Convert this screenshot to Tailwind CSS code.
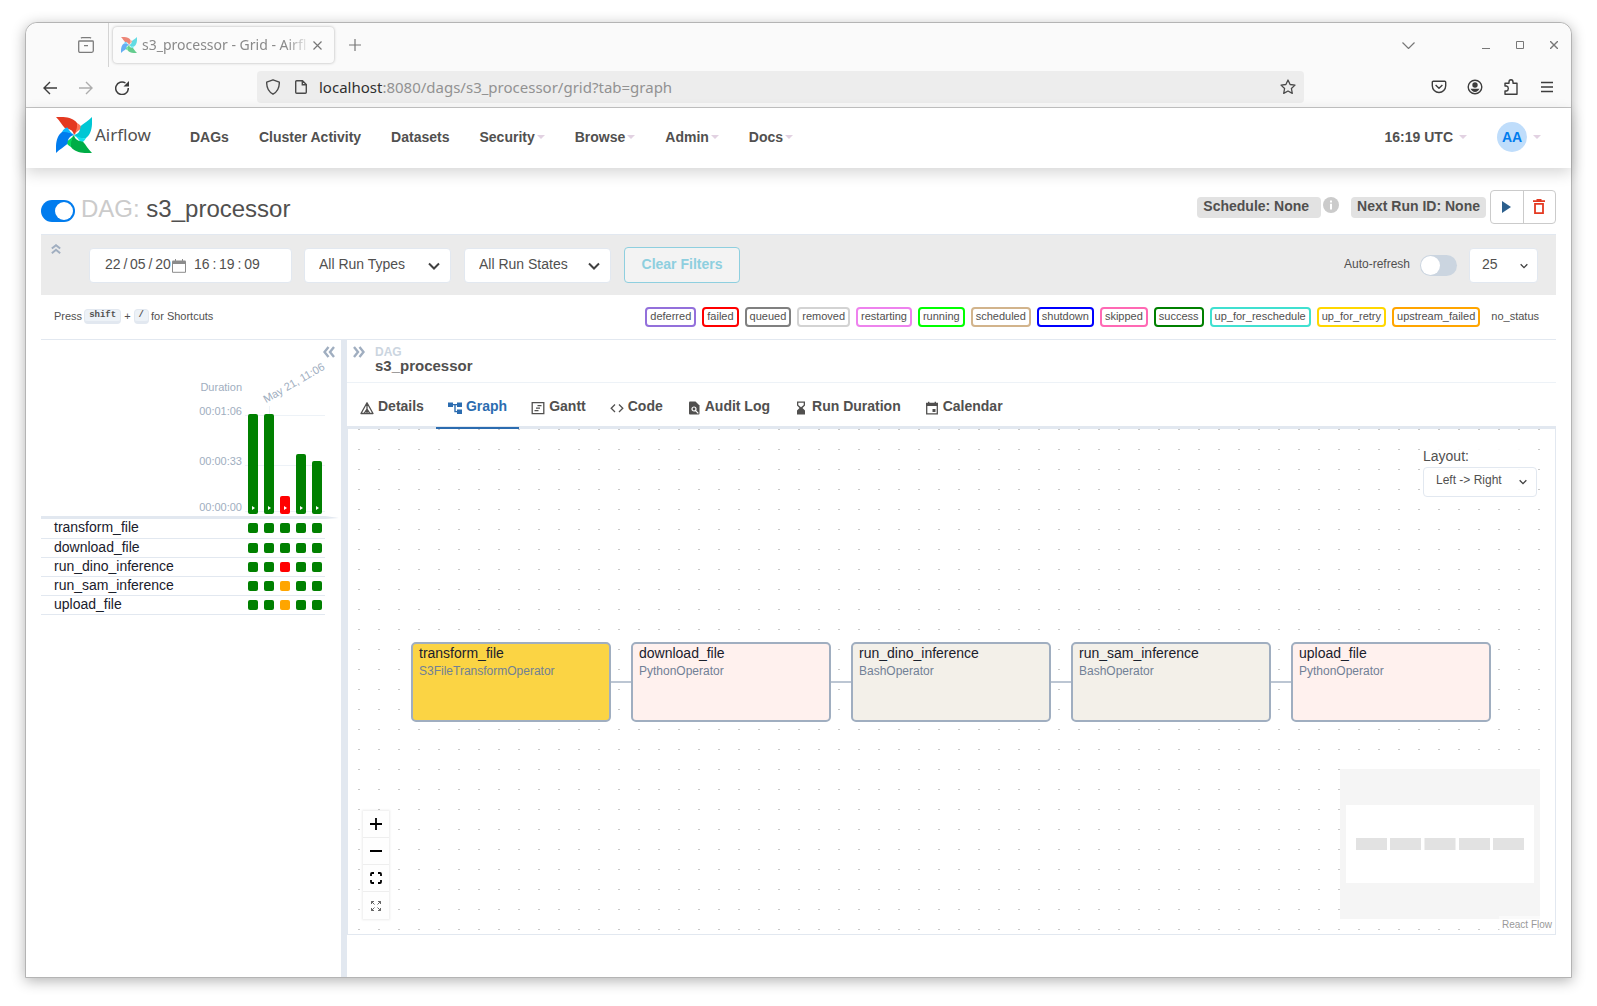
<!DOCTYPE html>
<html lang="en">
<head>
<meta charset="utf-8">
<title>s3_processor - Grid - Airflow</title>
<script src="https://cdn.jsdelivr.net/npm/@tailwindcss/browser@4"></script>
</head>
<body class="flex min-h-screen flex-col bg-white px-[25px] pt-[22px] pb-7 font-['Liberation_Sans',Arial,sans-serif] text-sm text-[#51504f]">
<svg class="hidden" aria-hidden="true">
  <symbol id="pinwheel" viewBox="0 0 36 36">
    <g><path fill="#e43921" d="M0 0C9-.5 17 .5 21 6 22 10 21 15 18 18 17 14 15 12 9 11.300 6 8 4 4 0 0Z"/><path fill="#ff7557" d="M21 6C24 7.500 25.500 9.500 25.500 11.500 23 13 20 15 18 18 20.500 14 21.500 10 21 6Z"/></g>
    <g transform="rotate(90 18 18)"><path fill="#00c7d4" d="M0 0C9-.5 17 .5 21 6 22 10 21 15 18 18 17 14 15 12 9 11.300 6 8 4 4 0 0Z"/><path fill="#11e1ee" d="M21 6C24 7.500 25.500 9.500 25.500 11.500 23 13 20 15 18 18 20.500 14 21.500 10 21 6Z"/></g>
    <g transform="rotate(180 18 18)"><path fill="#00ad46" d="M0 0C9-.5 17 .5 21 6 22 10 21 15 18 18 17 14 15 12 9 11.300 6 8 4 4 0 0Z"/><path fill="#04d659" d="M21 6C24 7.500 25.500 9.500 25.500 11.500 23 13 20 15 18 18 20.500 14 21.500 10 21 6Z"/></g>
    <g transform="rotate(270 18 18)"><path fill="#017cee" d="M0 0C9-.5 17 .5 21 6 22 10 21 15 18 18 17 14 15 12 9 11.300 6 8 4 4 0 0Z"/><path fill="#0cb6ff" d="M21 6C24 7.500 25.500 9.500 25.500 11.500 23 13 20 15 18 18 20.500 14 21.500 10 21 6Z"/></g>
  </symbol>
  <symbol id="chev" viewBox="0 0 12 12"><path d="M1 3.500 6 8.500l5-5" fill="none" stroke="currentColor" stroke-width="2"/></symbol>
  <symbol id="caret" viewBox="0 0 8 4"><path d="M0 0h8L4 4Z" fill="#e2d2e2"/></symbol>
  <symbol id="dbl" viewBox="0 0 12 12"><path d="M1 1l4 5-4 5M6.500 1l4 5-4 5" fill="none" stroke="#a0aec0" stroke-width="2.400"/></symbol>
</svg>

<div class="flex flex-1 flex-col rounded-t-xl border border-[#b4b4b4] bg-white shadow-[0_3px_14px_rgba(0,0,0,0.3)]">
  <!-- browser tabs -->
  <div class="flex h-11 items-center rounded-t-xl bg-[#fafafa] pr-[13px] font-['Noto_Sans','Open_Sans',sans-serif] text-[#8a8a8a]">
    <button aria-label="Recent browsing" class="flex h-11 w-[83px] items-center justify-end border-r border-[#d4d4d4] pr-3.5">
      <svg class="size-4" viewBox="0 0 16 16" fill="none" stroke="#7c7c7c" stroke-width="1.300"><path d="M3 1.200Q3.500.7 4 .7h8q.5 0 1 .5M1.500 4h13q.8 0 .8.800v9q0 1.500-1.500 1.500H2.200Q.7 15.300.7 13.800v-9Q.7 4 1.500 4ZM6 8.700h4"/></svg>
    </button>
    <div class="ml-1 flex h-9 w-[221px] items-center rounded bg-[#fbfbfb] pl-2 shadow-[0_0_3px_rgba(0,0,0,0.3)]">
      <svg class="size-4 shrink-0 opacity-60"><use href="#pinwheel"/></svg>
      <span class="ml-[5px] w-[169px] text-sm whitespace-nowrap mask-r-from-85%">s3_processor - Grid - Airfl</span>
      <button aria-label="Close tab" class="ml-[2px]"><svg class="size-[9px]" viewBox="0 0 9 9" stroke="#777" stroke-width="1.200"><path d="m.5.5 8 8m0-8-8 8"/></svg></button>
    </div>
    <button aria-label="New tab" class="ml-[15px]"><svg class="size-3" viewBox="0 0 12 12" stroke="#777" stroke-width="1.200"><path d="M6 0v12M0 6h12"/></svg></button>
    <div class="ml-auto flex items-center">
      <button aria-label="List tabs" class="mr-[67px]"><svg class="h-[7px] w-[13px]" viewBox="0 0 13 7" fill="none" stroke="#777" stroke-width="1.200"><path d="m.5.500 6 6 6-6"/></svg></button>
      <button aria-label="Minimise" class="mr-[26px]"><svg class="size-2" viewBox="0 0 8 8" stroke="#777"><path d="M0 7.500h8"/></svg></button>
      <button aria-label="Maximise" class="mr-[26px]"><svg class="size-2" viewBox="0 0 8 8" fill="none" stroke="#777"><path d="M.5.5h7v7h-7z"/></svg></button>
      <button aria-label="Close window"><svg class="size-2" viewBox="0 0 8 8" stroke="#777" stroke-width="1.400"><path d="m0 0 8 8m0-8-8 8"/></svg></button>
    </div>
  </div>
  <!-- browser toolbar -->
  <div class="flex h-[41px] items-center border-b border-[#c4c4c4] bg-[#fafafa] text-[#3d3d3d]">
    <div class="flex w-[231px] gap-[22px] pt-px pl-[17px]">
      <button aria-label="Back"><svg class="size-3.5" viewBox="0 0 14 14" fill="none" stroke="currentColor" stroke-width="1.400"><path d="M14 7H1m6-6L1 7l6 6"/></svg></button>
      <button aria-label="Forward"><svg class="size-3.5" viewBox="0 0 14 14" fill="none" stroke="#adadad" stroke-width="1.400"><path d="M0 7h13M7 1l6 6-6 6"/></svg></button>
      <button aria-label="Reload"><svg class="size-3.5" viewBox="0 0 14 14" fill="none" stroke="currentColor" stroke-width="1.500"><path d="M13.300 7A6.300 6.300 0 1 1 10.500 2"/><path d="M14 0v5.500H8.500Z" fill="currentColor" stroke="none"/></svg></button>
    </div>
    <div class="flex h-8 flex-1 items-center rounded bg-[#ededed] pr-2 pl-[9px]">
      <svg class="h-4 w-3.5" viewBox="0 0 14 16" fill="none" stroke="#4a4a4a" stroke-width="1.400"><path d="M7 .8 13.300 3.200C13.500 9 11 13 7 15.200 3 13 .5 9 .7 3.200Z" stroke-linejoin="round"/></svg>
      <svg class="ml-[15px] h-3.5 w-3" viewBox="0 0 12 14" fill="none" stroke="#4a4a4a" stroke-width="1.400"><path d="M7.500.7H1.700q-1 0-1 1v10.600q0 1 1 1h8.600q1 0 1-1V4.500ZM7.300.7v4h4"/></svg>
      <span class="ml-3 flex-1 pt-0.5 font-['Noto_Sans','Open_Sans',sans-serif] text-[15px] text-[#929292]"><span class="text-[#303030]">localhost</span>:8080/dags/s3_processor/grid?tab=graph</span>
      <button aria-label="Bookmark"><svg class="size-4" viewBox="0 0 16 16" fill="none" stroke="#4a4a4a" stroke-width="1.300" stroke-linejoin="round"><path d="m8 1 2.100 4.500 4.900.6-3.600 3.400.9 4.900L8 12l-4.300 2.400.9-4.900L1 6.100l4.900-.6Z"/></svg></button>
    </div>
    <div class="flex w-[267px] items-center justify-end gap-5 pr-4">
      <button aria-label="Pocket"><svg class="size-4" viewBox="0 0 16 16" fill="none" stroke="currentColor" stroke-width="1.400"><path d="M2.300 2.200h11.400q1 0 1 1v3.600a6.700 6.700 0 0 1-13.400 0V3.200q0-1 1-1ZM4.600 6 8 9.300 11.400 6" stroke-linejoin="round"/></svg></button>
      <button aria-label="Account"><svg class="size-4" viewBox="0 0 16 16"><circle cx="8" cy="8" r="6.800" fill="none" stroke="currentColor" stroke-width="1.400"/><circle cx="8" cy="6" r="2.700" fill="currentColor"/><path d="M3.500 9.800h9Q11 12.900 8 12.900T3.500 9.800Z" fill="currentColor"/></svg></button>
      <button aria-label="Extensions"><svg class="size-4" viewBox="0 0 16 16" fill="none" stroke="currentColor" stroke-width="1.400" stroke-linejoin="round"><path d="M2 7V4.200h4V3q0-2.200 2-2.200T10 3v1.200h4v11H2V12h1.500q1.800-.3 1.800-2.500T3.500 7Z"/></svg></button>
      <button aria-label="Menu"><svg class="size-4" viewBox="0 0 16 16" stroke="currentColor" stroke-width="1.300"><path d="M2 3.500h12M2 8h12M2 12.500h12"/></svg></button>
    </div>
  </div>

  <!-- Airflow navigation -->
  <nav class="flex h-[60px] items-center bg-white px-[30px] pb-0.5 font-bold shadow-[0_5px_14px_rgba(0,0,0,0.16)]">
    <a href="#" class="flex w-[134px] items-center gap-[3px] pb-1 font-['Noto_Sans',sans-serif] text-[17px] font-normal"><svg class="size-9"><use href="#pinwheel"/></svg>Airflow</a>
    <ul class="flex gap-[30px]">
      <li><a href="#">DAGs</a></li>
      <li><a href="#">Cluster Activity</a></li>
      <li><a href="#">Datasets</a></li>
      <li><a href="#" class="flex items-center gap-0.5">Security<svg class="h-1 w-2"><use href="#caret"/></svg></a></li>
      <li><a href="#" class="flex items-center gap-0.5">Browse<svg class="h-1 w-2"><use href="#caret"/></svg></a></li>
      <li><a href="#" class="flex items-center gap-0.5">Admin<svg class="h-1 w-2"><use href="#caret"/></svg></a></li>
      <li><a href="#" class="flex items-center gap-0.5">Docs<svg class="h-1 w-2"><use href="#caret"/></svg></a></li>
    </ul>
    <a href="#" class="ml-auto flex items-center gap-1.5">16:19 UTC<svg class="h-1 w-2"><use href="#caret"/></svg></a>
    <a href="#" class="ml-[30px] flex items-center gap-1.5"><span class="grid size-[30px] place-items-center rounded-full bg-[#bfddfb] text-[#017cee]">AA</span><svg class="h-1 w-2"><use href="#caret"/></svg></a>
  </nav>

  <main class="flex flex-1 flex-col px-[15px]">
    <header class="flex h-[66px] items-center pt-3">
      <input type="checkbox" role="switch" checked aria-label="Pause or unpause DAG" class="mt-2 h-[22px] w-[34px] appearance-none rounded-full bg-[#017cee] before:mt-0.5 before:ml-[14px] before:block before:size-[18px] before:rounded-full before:bg-white">
      <h1 class="mt-1 ml-1.5 text-2xl"><span class="text-[#cbcbcb]">DAG:</span> s3_processor</h1>
      <div class="ml-auto flex items-center font-bold">
        <span class="flex h-[21px] items-center rounded bg-[#e2e2e2] pr-3 pb-0.5 pl-1.5">Schedule: None</span>
        <svg class="mb-1 ml-0.5 size-4" viewBox="0 0 16 16"><circle cx="8" cy="8" r="8" fill="#cbcbcb"/><path d="M7 3.500h2v2H7zM7 6.800h2v5.700H7z" fill="#fff"/></svg>
        <span class="ml-3 flex h-[21px] items-center rounded bg-[#e2e2e2] px-1.5 pb-0.5">Next Run ID: None</span>
        <div class="ml-1 flex h-[34px] w-[66px] divide-x divide-[#cbcbcb] rounded border border-[#cbcbcb]">
          <button aria-label="Trigger DAG" class="grid flex-1 place-items-center"><svg class="h-3 w-[9px]" viewBox="0 0 9 12"><path d="M0 0l9 6-9 6Z" fill="#2c5f8d"/></svg></button>
          <button aria-label="Delete DAG" class="grid flex-1 place-items-center"><svg class="h-4 w-3" viewBox="0 0 12 16" fill="none" stroke="#e43921" stroke-width="1.800"><path d="M0 2.200h12M3.500 1h5M2 4.900h8v9.200H2Z"/></svg></button>
        </div>
      </div>
    </header>

    <form class="flex h-[61px] items-center border-t border-[#e2e8f0] bg-[#ebebeb] pr-[18px]">
      <button type="button" aria-label="Collapse filters" class="mb-8 ml-2.5"><svg class="block size-2.5 -rotate-90"><use href="#dbl"/></svg></button>
      <div class="ml-7 flex h-[35px] w-[203px] items-center rounded border border-[#e2e8f0] bg-white pb-0.5 pl-[15px]">
        <input aria-label="Base date" value="22&#8201;/&#8201;05&#8201;/&#8201;20" class="w-[67px]">
        <svg class="mt-1 h-3.5 w-3.5" viewBox="0 0 14 14" fill="none" stroke="#8c8c8c"><path d="M.5 2.500h13v10.800H.5Z"/><path d="M.5 1.500h13V5H.5ZM3 0h1v2H3zM10 0h1v2h-1z" fill="#8c8c8c" stroke="none"/></svg>
        <input aria-label="Base time" value="16&#8201;:&#8201;19&#8201;:&#8201;09" class="ml-2 w-20">
      </div>
      <div class="relative ml-3">
        <select aria-label="Run types" class="h-[35px] w-[147px] appearance-none rounded border border-[#e2e8f0] bg-white px-3.5 pb-0.5"><option>All Run Types</option></select>
        <svg class="pointer-events-none absolute top-3 right-[11px] size-3 text-[#404040]"><use href="#chev"/></svg>
      </div>
      <div class="relative ml-[13px]">
        <select aria-label="Run states" class="h-[35px] w-[147px] appearance-none rounded border border-[#e2e8f0] bg-white px-3.5 pb-0.5"><option>All Run States</option></select>
        <svg class="pointer-events-none absolute top-3 right-[11px] size-3 text-[#404040]"><use href="#chev"/></svg>
      </div>
      <button type="button" class="ml-[13px] h-9 w-[116px] rounded border border-[#8ecfdf] bg-[#f3f3f3] pb-0.5 font-bold text-[#8ecfdf]">Clear Filters</button>
      <label class="ml-auto flex items-center gap-2.5 text-xs"><span class="pb-0.5">Auto-refresh</span>
        <input type="checkbox" role="switch" class="h-[21px] w-[37px] appearance-none rounded-full bg-[#cbd5e0] before:mt-px before:ml-px before:block before:size-[19px] before:rounded-full before:bg-white">
      </label>
      <div class="relative ml-3">
        <select aria-label="Number of runs" class="h-[35px] w-[69px] appearance-none rounded border border-[#e2e8f0] bg-white px-3 pb-0.5"><option>25</option></select>
        <svg class="pointer-events-none absolute top-3.5 right-2.5 size-2 text-[#404040]"><use href="#chev"/></svg>
      </div>
    </form>

    <div class="flex h-[45px] items-center border-b border-[#e2e8f0] pr-3 pl-[13px] text-[11px]">
      <p class="flex items-center gap-0.5">Press <kbd class="rounded border border-b-[3px] border-[#e2e8f0] bg-[#edf2f7] px-1 font-['Liberation_Mono',monospace] text-[9px] leading-[11px] font-bold">shift</kbd> <span class="px-px">+</span> <kbd class="rounded border border-b-[3px] border-[#e2e8f0] bg-[#edf2f7] px-1 font-['Liberation_Mono',monospace] text-[9px] leading-[11px] font-bold">/</kbd> for Shortcuts</p>
      <ul class="ml-auto flex gap-1.5 leading-[14px] *:rounded *:border-2 *:px-[3px] *:pb-0.5 *:whitespace-nowrap">
        <li class="border-[#9370db]">deferred</li>
        <li class="border-[#ff0000]">failed</li>
        <li class="border-[#808080]">queued</li>
        <li class="border-[#d3d3d3]">removed</li>
        <li class="border-[#ee82ee]">restarting</li>
        <li class="border-[#00ff00]">running</li>
        <li class="border-[#d2b48c]">scheduled</li>
        <li class="border-[#0000ff]">shutdown</li>
        <li class="border-[#ff69b4]">skipped</li>
        <li class="border-[#008000]">success</li>
        <li class="border-[#40e0d0]">up_for_reschedule</li>
        <li class="border-[#ffd700]">up_for_retry</li>
        <li class="border-[#ffa500]">upstream_failed</li>
        <li class="border-transparent">no_status</li>
      </ul>
    </div>

    <div class="flex flex-1">
      <!-- run grid -->
      <section class="w-[300px] shrink-0">
        <div class="relative flex h-[176px] justify-end gap-[3px] pr-4">
          <button aria-label="Hide details" class="absolute top-1.5 right-1.5"><svg class="block size-3 rotate-180"><use href="#dbl"/></svg></button>
          <div class="flex flex-col pt-[39px] text-right text-[11px] leading-4 text-[#a0aec0]">
            <span>Duration</span><span class="mt-2">00:01:06</span><span class="mt-[34px]">00:00:33</span><span class="mt-[30px]">00:00:00</span>
          </div>
          <div class="relative mt-[75px] flex h-[99px] w-20 items-end gap-1.5 px-[3px]">
            <div class="absolute inset-x-0 top-0 h-[97px] border-y border-[#edf2f7]"></div>
            <div class="absolute inset-x-0 top-[50px] h-px bg-[#edf2f7]"></div>
            <div class="absolute -top-[9px] left-6 h-2 w-px bg-[#edf2f7]"></div>
            <span class="absolute -top-[22px] left-[22px] origin-bottom-left -rotate-[30deg] text-[11px] leading-3 whitespace-nowrap text-[#a0aec0]">May 21, 11:06</span>
            <button aria-label="Run 1" class="relative flex w-2.5 items-end justify-center rounded-xs bg-[#008000] pb-1" style="height:100px"><svg class="h-1 w-[3px]" viewBox="0 0 3 4"><path d="M0 0l3 2-3 2Z" fill="#fff"/></svg></button>
            <button aria-label="Run 2" class="relative flex w-2.5 items-end justify-center rounded-xs bg-[#008000] pb-1" style="height:100px"><svg class="h-1 w-[3px]" viewBox="0 0 3 4"><path d="M0 0l3 2-3 2Z" fill="#fff"/></svg></button>
            <button aria-label="Run 3" class="relative flex w-2.5 items-end justify-center rounded-xs bg-[#ff0000] pb-1" style="height:18px"><svg class="h-1 w-[3px]" viewBox="0 0 3 4"><path d="M0 0l3 2-3 2Z" fill="#fff"/></svg></button>
            <button aria-label="Run 4" class="relative flex w-2.5 items-end justify-center rounded-xs bg-[#008000] pb-1" style="height:60px"><svg class="h-1 w-[3px]" viewBox="0 0 3 4"><path d="M0 0l3 2-3 2Z" fill="#fff"/></svg></button>
            <button aria-label="Run 5" class="relative flex w-2.5 items-end justify-center rounded-xs bg-[#008000] pb-1" style="height:53px"><svg class="h-1 w-[3px]" viewBox="0 0 3 4"><path d="M0 0l3 2-3 2Z" fill="#fff"/></svg></button>
          </div>
        </div>
        <svg class="block h-[3px] w-full" viewBox="0 0 300 3" preserveAspectRatio="none"><path d="M0 0h284l14 2-14 1H0Z" fill="#e2e8f0"/></svg>
        <table class="w-[284px] table-fixed border-collapse leading-4 text-[#1a202c]">
          <colgroup><col><col class="w-4"><col class="w-4"><col class="w-4"><col class="w-4"><col class="w-[13px]"></colgroup>
          <tbody id="tasks"></tbody>
        </table>
      </section>

      <div class="w-1.5 shrink-0 bg-[#e2e8f0]"></div>

      <!-- details -->
      <section class="flex min-w-0 flex-1 flex-col pb-[42px]">
        <div class="flex h-[43px] items-start border-b border-[#edf2f7] pt-1.5 pl-1.5">
          <button aria-label="Hide grid"><svg class="block size-3"><use href="#dbl"/></svg></button>
          <div class="ml-2.5 font-bold"><p class="text-xs leading-[13px] text-[#cbd5e0]">DAG</p><p class="text-[15px] leading-[14px]">s3_processor</p></div>
        </div>
        <div role="tablist" class="flex h-[46px] border-b-[3px] border-[#e2e8f0] pl-px font-bold *:-mb-[3px] *:flex *:items-center *:gap-1 *:border-b-2 *:border-transparent *:px-3 *:pt-0.5">
          <button role="tab"><svg class="mt-1 size-3.5" viewBox="0 0 14 14" fill="none" stroke="currentColor" stroke-width="1.300"><path d="M7 1.800 13 12.500H1ZM7 1.800v10.700M7 8 4 12.500M7 8l3 4.500" stroke-linejoin="round"/></svg>Details</button>
          <button role="tab" aria-selected="true" class="text-[#2b6cb0]" style="border-color:#2b6cb0"><svg class="mt-1 size-3.5" viewBox="0 0 14 14" fill="currentColor"><path d="M0 1.500h5v4.500H0zM9 1.500h5v4.500H9zM9 8.500h5V13H9zM5 3h4v1.300H5zM6.300 3.500h1.400v7.700H6.300zM6.300 10h3v1.300h-3z"/></svg>Graph</button>
          <button role="tab"><svg class="mt-1 size-3.5" viewBox="0 0 14 14" fill="none" stroke="currentColor" stroke-width="1.300"><path d="M1.200 1.700h11.600v11H1.200ZM6.500 4.700h4M5 7.200h4M3.500 9.700h4"/></svg>Gantt</button>
          <button role="tab"><svg class="mt-1 size-3.5" viewBox="0 0 14 14" fill="none" stroke="currentColor" stroke-width="1.300"><path d="M5 3.500 1.200 7.200 5 11M9 3.500l3.800 3.700L9 11"/></svg>Code</button>
          <button role="tab"><svg class="mt-1 size-3.5" viewBox="0 0 14 14"><path d="M2 1.500Q2 .5 3 .5h5.500l4 4v8q0 1-1 1H3q-1 0-1-1Z" fill="currentColor"/><circle cx="7" cy="8" r="2" fill="none" stroke="#fff" stroke-width="1.200"/><path d="m8.300 9.300 3 3" stroke="#fff" stroke-width="1.200"/></svg>Audit Log</button>
          <button role="tab"><svg class="mt-1 size-3.5" viewBox="0 0 14 14"><path d="M3 .5h8v4L8.500 7 11 9.500v4H3v-4L5.500 7 3 4.500Z" fill="currentColor"/><path d="M4.300 1.800h5.400v2.300L7 6.300 4.300 4.100Z" fill="#fff"/></svg>Run Duration</button>
          <button role="tab"><svg class="mt-1 size-3.5" viewBox="0 0 14 14"><path d="M1.700 2.500h10.600v10.300H1.700Z" fill="none" stroke="currentColor" stroke-width="1.300"/><path d="M1 2h12v3H1zM3 .7h1.400V3H3zM9.600.7H11V3H9.600zM7.500 8h3v3h-3z" fill="currentColor"/></svg>Calendar</button>
        </div>
        <div class="relative flex flex-1 items-center justify-center border border-t-0 border-[#e2e8f0] pt-px pr-px">
          <svg class="absolute inset-0 size-full" aria-hidden="true"><pattern id="dots" x="10" width="20" height="20" patternUnits="userSpaceOnUse"><rect width="2" height="1" fill="#c8c8c8"/></pattern><rect width="100%" height="100%" fill="url(#dots)"/></svg>
          <div class="relative flex items-center" id="flow"></div>

          <label class="absolute top-[18px] right-[18px] flex w-[114px] flex-col bg-white/90 leading-[18px]">Layout:
            <select class="mt-0.5 h-[30px] appearance-none rounded border border-[#e2e8f0] px-3 pb-1 text-xs"><option>Left -&gt; Right</option></select>
            <svg class="pointer-events-none absolute right-2.5 bottom-[11px] size-2 text-[#404040]"><use href="#chev"/></svg>
          </label>

          <div class="absolute bottom-[15px] left-[15px] flex w-[26px] flex-col divide-y divide-[#eee] bg-[#fefefe] text-black shadow-[0_0_2px_1px_rgba(0,0,0,0.08)] *:grid *:h-[27px] *:place-items-center">
            <button aria-label="Zoom in"><svg class="size-3" viewBox="0 0 12 12" stroke="currentColor" stroke-width="1.800"><path d="M6 0v12M0 6h12"/></svg></button>
            <button aria-label="Zoom out"><svg class="size-3" viewBox="0 0 12 12" stroke="currentColor" stroke-width="2"><path d="M0 6h12"/></svg></button>
            <button aria-label="Fit view"><svg class="size-3" viewBox="0 0 12 12" fill="none" stroke="currentColor" stroke-width="1.800"><path d="M1 4V2q0-1 1-1h2M8 1h2q1 0 1 1v2M11 8v2q0 1-1 1H8M4 11H2q-1 0-1-1V8"/></svg></button>
            <button aria-label="Focus"><svg class="size-2.5" viewBox="0 0 10 10" fill="none" stroke="#555" stroke-width=".9"><path d="M.5 3V.5H3M.5.5l3 3M7 .5h2.500V3M9.500.5l-3 3M9.500 7v2.500H7M9.500 9.500l-3-3M3 9.500H.5V7M.5 9.500l3-3"/></svg></button>
          </div>

          <svg class="absolute right-[15px] bottom-[15px] h-[150px] w-[200px]" viewBox="0 0 200 150"><rect width="200" height="150" fill="#f5f5f5"/><rect x="6" y="36" width="188" height="78" fill="#fff"/><g fill="#e2e2e2"><rect x="16" y="69" width="31" height="12"/><rect x="50" y="69" width="31" height="12"/><rect x="84.500" y="69" width="31" height="12"/><rect x="119" y="69" width="31" height="12"/><rect x="153" y="69" width="31" height="12"/></g></svg>
          <a href="#" class="absolute right-0 bottom-0 bg-white/50 px-[3px] pt-0.5 pb-[3px] text-[10px] leading-[13px] text-[#999]">React Flow</a>
        </div>
      </section>
    </div>
  </main>
</div>

<script>
  const tasks = [
    ['transform_file', 'S3FileTransformOperator', '#fbd444', 'green'],
    ['download_file', 'PythonOperator', '#fff1ee', 'green'],
    ['run_dino_inference', 'BashOperator', '#f3f0e9', 'red'],
    ['run_sam_inference', 'BashOperator', '#f3f0e9', 'orange'],
    ['upload_file', 'PythonOperator', '#fff1ee', 'orange'],
  ];
  document.getElementById('tasks').innerHTML = tasks.map(([name, , , third]) =>
    `<tr class="border-b border-[#e2e8f0]"><td class="h-[19px] p-0 pb-0.5 pl-[13px]">${name}</td>` +
    ['green', 'green', third, 'green', 'green'].map(c =>
      `<td class="p-0"><div class="size-2.5 rounded-xs" style="background:${c}"></div></td>`).join('') + '</tr>').join('');
  document.getElementById('flow').innerHTML = tasks.map(([name, op, bg]) =>
    `<div class="h-20 w-[200px] rounded-[5px] border-2 border-[#a0aec0] px-1.5" style="background:${bg}"><p class="leading-[18px] text-[#1a202c]">${name}</p><p class="mt-px text-xs leading-[17px] text-[#718096]">${op}</p></div>`
  ).join('<div class="h-0.5 w-5 bg-[#a0aec0]/70"></div>');
</script>
</body>
</html>
